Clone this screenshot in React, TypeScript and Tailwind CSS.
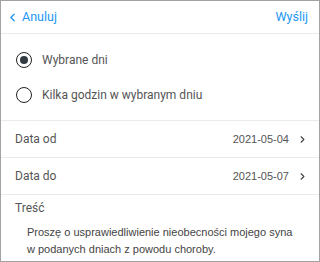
import { ChevronLeft, ChevronRight } from "lucide-react";

function Radio({ checked, label }: { checked?: boolean; label: string }) {
  return (
    <div className="flex items-center h-[35px] pl-[15px]">
      <div className="w-4 h-4 rounded-full border-[1.5px] border-[#222] flex items-center justify-center">
        {checked && <div className="w-[8px] h-[8px] rounded-full bg-[#333a40]" />}
      </div>
      <span className="ml-[10px] text-[12px] text-[#555]">{label}</span>
    </div>
  );
}

function DateRow({ label, value }: { label: string; value: string }) {
  return (
    <div className="flex items-center justify-between h-[37px] pl-[14px] pr-[11px] border-b border-[#ebebeb]">
      <span className="text-[12px] text-[#555]">{label}</span>
      <div className="flex items-center gap-[8px]">
        <span className="text-[11px] text-[#555] font-['Liberation_Sans',sans-serif]">{value}</span>
        <ChevronRight size={11} strokeWidth={2.5} className="text-[#444]" />
      </div>
    </div>
  );
}

export default function App() {
  return (
    <div className="w-[320px] h-[262px] bg-white border border-[#a3a3a3] overflow-hidden font-['Roboto',sans-serif]">
      {/* header */}
      <div className="flex items-center justify-between h-[33px] pl-[5px] pr-[11px] border-b border-[#ebebeb]">
        <div className="flex items-center text-[#2196f3]">
          <ChevronLeft size={13} strokeWidth={2.5} />
          <span className="ml-[3px] text-[12.5px]">Anuluj</span>
        </div>
        <span className="text-[12.5px] text-[#2196f3]">Wyślij</span>
      </div>

      {/* radios */}
      <div className="pt-[8px] pb-[8px] border-b border-[#ebebeb]">
        <Radio checked label="Wybrane dni" />
        <Radio label="Kilka godzin w wybranym dniu" />
      </div>

      <DateRow label="Data od" value="2021-05-04" />
      <DateRow label="Data do" value="2021-05-07" />

      <div className="pl-[14px] pt-[4px]">
        <div className="text-[12px] text-[#555]">Treść</div>
        <p className="mt-[7px] pl-[12px] pr-[24px] text-[11px] leading-[17px] text-[#444] font-['Liberation_Sans',sans-serif]">
          Proszę o usprawiedliwienie nieobecności mojego syna w podanych dniach z powodu choroby.
        </p>
      </div>
    </div>
  );
}
